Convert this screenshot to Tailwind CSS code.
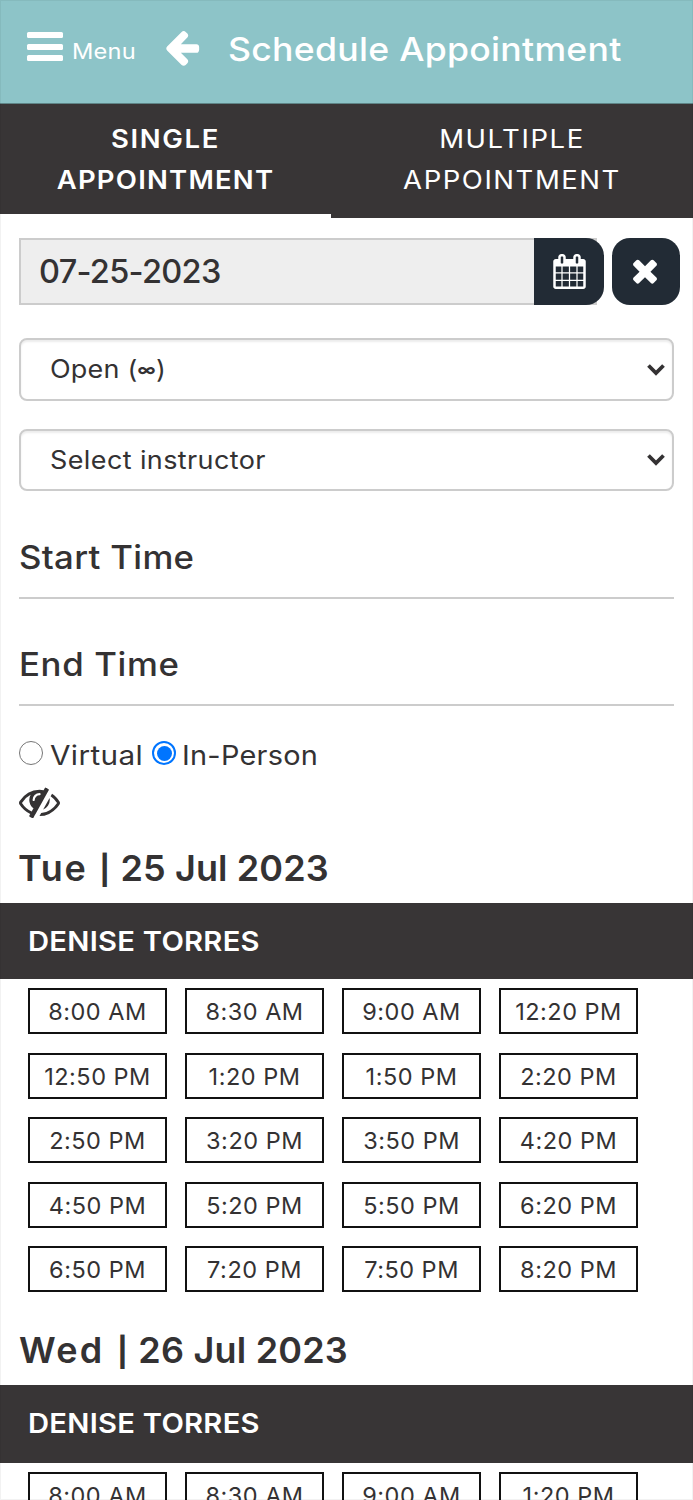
<!DOCTYPE html>
<html lang="en">
<head>
<meta charset="utf-8">
<title>Schedule Appointment</title>
<script src="https://cdn.jsdelivr.net/npm/@tailwindcss/browser@4"></script>
</head>
<body class="h-[1500px] overflow-hidden bg-white font-['Inter','Liberation_Sans',sans-serif] text-[#343233]">
<div class="relative h-[1500px] overflow-hidden">
<header class="flex h-[104px] items-start border-b border-[#5f8587] bg-[#8dc4c8] text-white">
  <button class="ml-[27px] mt-8 flex h-[29px] w-9 flex-col justify-between" aria-label="Menu">
    <span class="h-[6px] w-full rounded-[1.5px] bg-white"></span><span class="h-[6px] w-full rounded-[1.5px] bg-white"></span><span class="h-[6px] w-full rounded-[1.5px] bg-white"></span>
  </button>
  <span class="ml-[9px] mt-[36px] w-[68px] origin-left scale-x-[1.1] whitespace-nowrap text-[21.5px] leading-[30px] tracking-[0.2px]">Menu</span>
  <svg class="ml-[22px] mt-[27px] size-10 shrink-0" viewBox="0 0 1792 1792" fill="currentColor"><path d="M1664 896v128q0 53-32.500 90.500t-84.500 37.500h-704l293 294q38 36 38 90t-38 90l-75 76q-37 37-90 37-52 0-91-37l-651-652q-37-37-37-90 0-52 37-91l651-650q38-38 91-38 52 0 90 38l75 74q38 38 38 91t-38 91l-293 293h704q52 0 84.500 37.500t32.500 90.500z"/></svg>
  <h1 class="ml-[26px] mt-[27px] origin-left scale-x-[1.08] whitespace-nowrap text-[33px] font-medium leading-[44px] tracking-[0.24px]">Schedule Appointment</h1>
</header>
<nav class="flex h-[114px] bg-[#383536] text-center text-[25px] leading-[41px] text-white">
  <a class="w-[331px] border-b-4 border-white pt-[15px] font-semibold"><span class="block scale-x-[1.1] tracking-[1.5px]">SINGLE</span><span class="block scale-x-[1.1] tracking-[1.1px]">APPOINTMENT</span></a>
  <a class="flex-1 pt-[15px]"><span class="block scale-x-[1.1] tracking-[1.45px]">MULTIPLE</span><span class="block scale-x-[1.1] tracking-[1.4px]">APPOINTMENT</span></a>
</nav>
<main>
  <div class="mt-5 flex h-[67px] pl-[19px]">
    <div class="flex w-[578px] items-center border-2 border-[#ccc] bg-[#eee] pl-[18px] pt-[2px] text-[32.5px] font-medium tracking-[-0.7px]">07-25-2023</div>
    <button class="relative -ml-[63px] flex w-[70px] items-center justify-center rounded-r-[18px] bg-[#222b35] text-white">
      <svg class="size-[35px]" viewBox="0 0 1792 1792" fill="currentColor"><path d="M192 1664h288v-288h-288v288zm352 0h320v-288h-320v288zm-352-352h288v-320h-288v320zm352 0h320v-320h-320v320zm-352-384h288v-288h-288v288zm736 736h320v-288h-320v288zm-384-736h320v-288h-320v288zm768 736h288v-288h-288v288zm-384-352h320v-320h-320v320zm-352-864v-288q0-13-9.500-22.500t-22.500-9.500h-64q-13 0-22.500 9.500t-9.500 22.500v288q0 13 9.500 22.500t22.500 9.500h64q13 0 22.500-9.500t9.500-22.500zm736 864h288v-320h-288v320zm-384-384h320v-288h-320v288zm384 0h288v-288h-288v288zm32-480v-288q0-13-9.500-22.500t-22.500-9.500h-64q-13 0-22.500 9.500t-9.500 22.500v288q0 13 9.500 22.500t22.500 9.500h64q13 0 22.500-9.500t9.500-22.500zm384-64v1280q0 52-38 90t-90 38h-1408q-52 0-90-38t-38-90v-1280q0-52 38-90t90-38h128v-96q0-66 47-113t113-47h64q66 0 113 47t47 113v96h384v-96q0-66 47-113t113-47h64q66 0 113 47t47 113v96h128q52 0 90 38t38 90z"/></svg>
    </button>
    <button class="ml-[7.5px] flex w-[68px] items-center justify-center rounded-[18px] bg-[#222b35] pr-px text-white">
      <svg class="mt-[2px] size-9" viewBox="0 128 1792 1792" fill="currentColor"><path d="M1490 1322q0 40-28 68l-136 136q-28 28-68 28t-68-28l-294-294-294 294q-28 28-68 28t-68-28l-136-136q-28-28-28-68t28-68l294-294-294-294q-28-28-28-68t28-68l136-136q28-28 68-28t68 28l294 294 294-294q28-28 68-28t68 28l136 136q28 28 28 68t-28 68l-294 294 294 294q28 28 28 68z"/></svg>
    </button>
  </div>
  <div class="mx-[19px] mt-[33px] flex h-[63px] items-center justify-between rounded-[8px] border-2 border-[#ccc] pl-[29px] pr-[7px] text-[25px] shadow-[inset_0_2px_2px_rgba(0,0,0,0.075)]">
    <span class="mt-px origin-left scale-x-[1.08] tracking-[0.2px]">Open (<span class="inline-block w-[17px] -translate-y-[2px] text-[17px] font-bold tracking-normal">∞</span>)</span>
    <svg class="h-[12px] w-[18px]" viewBox="0 0 18 12" fill="none" stroke="currentColor" stroke-width="3.800"><path d="M1.500 1.500 9 9l7.500-7.500"/></svg>
  </div>
  <div class="mx-[19px] mt-[28px] flex h-[62px] items-center justify-between rounded-[8px] border-2 border-[#ccc] pl-[29px] pr-[7px] text-[25px] shadow-[inset_0_2px_2px_rgba(0,0,0,0.075)]">
    <span class="mt-px origin-left scale-x-[1.08] tracking-[0.36px]">Select instructor</span>
    <svg class="h-[12px] w-[18px]" viewBox="0 0 18 12" fill="none" stroke="currentColor" stroke-width="3.800"><path d="M1.500 1.500 9 9l7.500-7.500"/></svg>
  </div>
  <div class="mx-[19px] mt-[27px] h-[81px] border-b-2 border-[#ccc] pt-[18px] text-[32.5px] font-medium leading-[44px]"><span class="inline-block origin-left scale-x-[1.07] tracking-[0.3px]">Start Time</span></div>
  <div class="mx-[19px] mt-[26px] h-[81px] border-b-2 border-[#ccc] pt-[18px] text-[32.5px] font-medium leading-[44px]"><span class="inline-block origin-left scale-x-[1.07] tracking-[0.6px]">End Time</span></div>
  <div class="mt-[30px] flex h-10 items-center pl-[19px] text-[27px] leading-10">
    <span class="mb-[6px] size-6 rounded-full border-[1.5px] border-[#767676]"></span>
    <span class="ml-[7px] w-[94px] origin-left scale-x-[1.1] whitespace-nowrap tracking-[0.33px]">Virtual</span>
    <span class="mb-[6px] ml-2 flex size-6 items-center justify-center rounded-full border-2 border-[#0075ff]"><span class="size-[15px] rounded-full bg-[#0075ff]"></span></span>
    <span class="ml-[6px] origin-left scale-x-[1.07] tracking-[0.25px]">In-Person</span>
  </div>
  <svg class="ml-[19px] mt-[10px] h-[32px] w-[41px]" viewBox="0 220 1792 1400" preserveAspectRatio="none" fill="currentColor"><path d="M555 1335l78-141q-87-63-136-159t-49-203q0-121 61-225-229 117-381 353 167 258 427 375zm389-759q0-20-14-34t-34-14q-125 0-214.500 89.500t-89.500 214.500q0 20 14 34t34 14 34-14 14-34q0-86 61-147t147-61q20 0 34-14t14-34zm363-191q0 7-1 9-106 189-316 567t-315 566l-49 89q-10 16-28 16-12 0-134-70-16-10-16-28 0-12 44-87-143-65-263.500-173t-208.500-245q-20-31-20-69t20-69q153-235 380-371t496-136q89 0 180 17l54-97q10-16 28-16 5 0 18 6t31 15.500 33 18.500 31.500 18.500 19.500 11.500q16 10 16 27zm37 447q0 139-79 253.500t-209 164.500l280-502q8 45 8 84zm448 128q0 35-20 69-39 64-109 145-150 172-347.500 267t-419.500 95l74-132q212-18 392.500-137t301.500-307q-115-179-282-294l63-112q95 64 182.500 153t144.500 186q20 34 20 69z"/></svg>
  <h2 class="mt-[25px] whitespace-pre pl-[18px] text-[36px] font-semibold leading-[50px] tracking-[0.1px]"><span class="tracking-[1.7px]">Tue </span><span class="inline-block translate-y-[2px] scale-y-[.8]">|</span> 25 Jul 2023</h2>
  <h3 class="mt-[10px] h-[76px] bg-[#383536] pl-[28px] text-[27px] font-semibold leading-[77px] text-white"><span class="inline-block origin-left scale-x-[1.08] tracking-[0.25px]">DENISE TORRES</span></h3>
  <div class="ml-[28px] mt-[9px] grid grid-cols-[repeat(4,139px)] gap-x-[18px] gap-y-[18.6px] text-center text-[23.5px] leading-[43px] tracking-[0.5px] *:h-[46px] *:border-2 *:border-[#111]">
    <div>8:00 AM</div><div>8:30 AM</div><div>9:00 AM</div><div>12:20 PM</div>
    <div>12:50 PM</div><div>1:20 PM</div><div>1:50 PM</div><div>2:20 PM</div>
    <div>2:50 PM</div><div>3:20 PM</div><div>3:50 PM</div><div>4:20 PM</div>
    <div>4:50 PM</div><div>5:20 PM</div><div>5:50 PM</div><div>6:20 PM</div>
    <div>6:50 PM</div><div>7:20 PM</div><div>7:50 PM</div><div>8:20 PM</div>
  </div>
  <h2 class="mt-[33px] whitespace-pre pl-[19px] text-[36px] font-semibold leading-[50px] tracking-[0.2px]"><span class="tracking-[2.3px]">Wed </span><span class="inline-block translate-y-[2px] scale-y-[.8]">|</span> 26 Jul 2023</h2>
  <h3 class="mt-[10px] h-[78px] bg-[#383536] pl-[28px] text-[27px] font-semibold leading-[77px] text-white"><span class="inline-block origin-left scale-x-[1.08] tracking-[0.25px]">DENISE TORRES</span></h3>
  <div class="ml-[28px] mt-[9px] grid grid-cols-[repeat(4,139px)] gap-x-[18px] text-center text-[23.5px] leading-[43px] tracking-[0.5px] *:h-[46px] *:border-2 *:border-[#111]">
    <div>8:00 AM</div><div>8:30 AM</div><div>9:00 AM</div><div>1:20 PM</div>
  </div>
</main>
<div class="pointer-events-none absolute inset-0 border border-black/5"></div>
</div>
</body>
</html>
